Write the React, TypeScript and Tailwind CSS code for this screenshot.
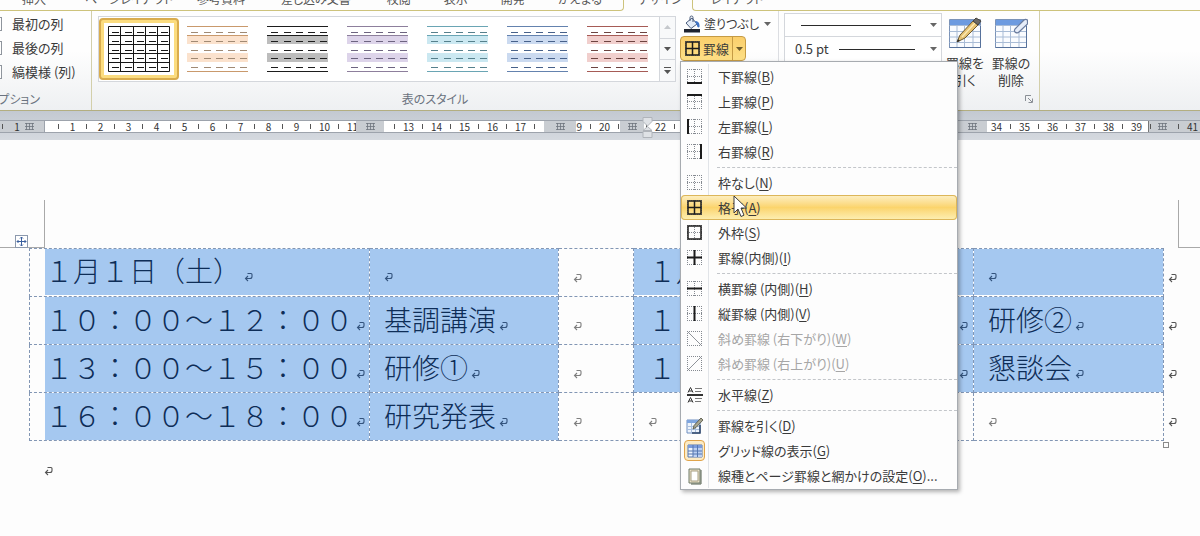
import type { ReactNode } from 'react'

function cn(...parts: (string | false | undefined)[]) {
  return parts.filter(Boolean).join(' ')
}

type Edges = 'b' | 't' | 'l' | 'r' | 'none' | 'all' | 'box' | 'inner' | 'h' | 'v' | 'down' | 'up'

function BorderIcon({ kind }: { kind: Edges }) {
  const diagonal = kind === 'down' || kind === 'up'
  const solid: Record<Edges, string> = {
    b: 'M0 14h15',
    t: 'M0 1h15',
    l: 'M1 0v15',
    r: 'M14 0v15',
    none: '',
    all: 'M1 1h13v13h-13zM1 7.5h13M7.5 1v13',
    box: 'M1 1h13v13h-13z',
    inner: 'M0 7.5h15M7.5 0v15',
    h: 'M0 7.5h15',
    v: 'M7.5 0v15',
    down: '',
    up: '',
  }
  return (
    <svg viewBox="0 0 15 15" className="h-[15px] w-[15px] shrink-0" fill="none" aria-hidden="true">
      <path d="M0 .5h15M0 14.5h15M.5 0v15M14.5 0v15" stroke="#858a91" strokeDasharray="1 1" />
      {!diagonal && <path d="M0 7.5h15M7.5 0v15" stroke="#858a91" strokeDasharray="1 1" />}
      {kind === 'down' && <path d="M1 1l13 13" stroke="#8f9399" />}
      {kind === 'up' && <path d="M1 14L14 1" stroke="#8f9399" />}
      <path d={solid[kind]} stroke="#1c1c1c" strokeWidth={kind === 'all' || kind === 'box' ? 1.5 : 2} />
    </svg>
  )
}

function HorizontalRuleIcon() {
  return (
    <svg viewBox="0 0 16 16" className="h-4 w-4" fill="none" stroke="#333" aria-hidden="true">
      <path d="M0 8h16" strokeWidth="2" />
      <path d="M1 5.5L3.5 .5L6 5.5M2 4h3M1 15.5l2.500-5l2.500 5M2 14h3" />
      <path d="M8 1.500h7M8 4.500h6M8 11.500h7M8 14.500h6" stroke="#777" />
    </svg>
  )
}

function DrawTableIcon() {
  return (
    <svg viewBox="0 0 18 18" className="h-[18px] w-[18px]" fill="none" aria-hidden="true">
      <path d="M1 3h13v13H1z" fill="#eef4fc" stroke="#6f8fc0" />
      <path d="M1 3h13v3H1z" fill="#7fa6df" />
      <path d="M1 9.500h13M1 12.500h13M5.500 6v10M9.500 6v10" stroke="#a9c0e0" />
      <path d="M14 8v8H6" stroke="#2d4468" strokeWidth="1.500" />
      <path d="M7 12l1-3.500l7-7.500l2 2l-7 7.500z" fill="#a8a690" stroke="#4d4c3e" strokeWidth=".8" />
    </svg>
  )
}

function GridlinesIcon() {
  return (
    <svg viewBox="0 0 18 16" className="h-4 w-[18px]" fill="none" aria-hidden="true">
      <path d="M2 2h14v12H2z" fill="#eef4fc" stroke="#5577b0" />
      <path d="M2 2h14v3H2z" fill="#7a9cdc" />
      <path d="M7 5h9v9H7z" fill="#bcd0f2" />
      <path d="M2 8h14M2 11h14M7 2v12M11.500 2v12" stroke="#5577b0" />
    </svg>
  )
}

function PageBorderIcon() {
  return (
    <svg viewBox="0 0 16 18" className="h-[18px] w-4" fill="none" aria-hidden="true">
      <path d="M2 2h11v14H2z" fill="#e9e0c8" stroke="#6f7a68" />
      <path d="M4 4h7v10H4z" fill="#fff" stroke="#a79f82" />
      <path d="M14 3v14H4" stroke="#54604f" />
    </svg>
  )
}

function PaintBucketIcon() {
  return (
    <svg viewBox="0 0 18 18" className="h-[18px] w-[18px] shrink-0" fill="none" aria-hidden="true">
      <path d="M3 8l6-5l5 6l-6 4.500z" fill="#e4ecf7" stroke="#4a5c7c" />
      <path d="M7 6V2.500a1.500 1.500 0 0 1 3 0V7" stroke="#4a5c7c" />
      <path d="M12 6c3 0 5 2 4.500 6c-1 1-2.500 0-2.500-1.500z" fill="#3f74c6" />
      <path d="M1 14h16v3.500H1z" fill="#1f2430" />
    </svg>
  )
}

function LargeTableIcon({ tool }: { tool: 'pencil' | 'eraser' }) {
  return (
    <svg viewBox="0 0 34 32" className="h-8 w-[34px]" fill="none" aria-hidden="true">
      <path d="M1.500 2.500h31v28h-31z" fill="#fafcff" stroke="#7b93b8" />
      <path d="M2 3h30v5H2z" fill="#6d9be0" />
      <path d="M1.500 8.500h31M1.500 14.500h31M1.500 20h31M1.500 25.500h31M9 9v21M16.500 9v21M25 9v21" stroke="#a9bcd6" />
      <path d="M32.500 9v21.500h-31" stroke="#56719b" />
      {tool === 'pencil' ? (
        <>
          <path d="M9 25l3-7L25 4l5 4L17 21z" fill="#e6c272" stroke="#6d5a33" />
          <path d="M14 20L27 6" stroke="#fbe9b4" strokeWidth="1.500" />
          <path d="M25 4l3-3l5 3l-3 4z" fill="#6b6964" stroke="#45433f" />
          <path d="M9 25l1-3l2 2z" fill="#2b2b2b" />
        </>
      ) : (
        <path
          d="M21 12l9-9c1-1 2-1 3.500 0v4L25 15c-2 2-6 0-4-3z"
          fill="#e6edf9"
          stroke="#6a7c9e"
          strokeWidth="1.200"
        />
      )}
    </svg>
  )
}

function Caret({ className }: { className?: string }) {
  return (
    <svg viewBox="0 0 7 4" className={cn('h-1 w-[7px] shrink-0', className)} aria-hidden="true">
      <path d="M0 0h7L3.500 4z" fill="currentColor" />
    </svg>
  )
}

function ReturnMark({ className }: { className?: string }) {
  return (
    <svg
      viewBox="0 0 9 10"
      className={cn('h-[10px] w-[9px] shrink-0', className)}
      fill="none"
      stroke="currentColor"
      aria-hidden="true"
    >
      <path d="M3.500 1.500h3.500q1 0 1 1v2q0 2-2 2H1.500M4 4L1.500 6.500L4 9" strokeWidth="1.100" />
    </svg>
  )
}

const TABS = [
  { label: '挿入', className: 'ml-[22px]' },
  { label: 'ページレイアウト', className: 'ml-[39px]' },
  { label: '参考資料', className: 'ml-6' },
  { label: '差し込み文書', className: 'ml-9' },
  { label: '校閲', className: 'ml-9' },
  { label: '表示', className: 'ml-[33px]' },
  { label: '開発', className: 'ml-[33px]' },
  { label: 'かえまる', className: 'ml-[33px]' },
]

function TabStrip() {
  return (
    <nav className="flex h-[11px] items-stretch bg-[#fdfdfd] text-xs leading-4 whitespace-nowrap text-[#555]">
      <div className="flex w-[624px] items-end rounded-br border-r border-b border-[#cdc37c] pb-[3px]">
        {TABS.map((t) => (
          <button key={t.label} type="button" className={t.className}>
            {t.label}
          </button>
        ))}
      </div>
      <div className="flex w-[68px] items-end pb-1 pl-[14px]">
        <button type="button">デザイン</button>
      </div>
      <div className="flex flex-1 items-end rounded-bl border-b border-l border-[#cdc37c] pb-[3px]">
        <button type="button" className="ml-[18px]">
          レイアウト
        </button>
      </div>
    </nav>
  )
}

type StyleTone = { line: string; dash: string; band: string }

const TONES: StyleTone[] = [
  { line: '#c9996c', dash: '#a08a74', band: '#fbe2cd' },
  { line: '#1d1d1d', dash: '#1d1d1d', band: '#bdbdbd' },
  { line: '#8d7f9c', dash: '#6d6480', band: '#ddd4ea' },
  { line: '#6aa5b4', dash: '#56808c', band: '#cbe8f1' },
  { line: '#6482ae', dash: '#47618a', band: '#cbdaf0' },
  { line: '#a65b56', dash: '#6d4441', band: '#f1cfcd' },
]

const DASH_ROWS = [6, 15, 24, 32, 41]

function dashPath() {
  return DASH_ROWS.map((y) => [4, 17, 29, 41, 53].map((x) => `M${x} ${y + 0.5}h7`).join('')).join('')
}

function BandedThumb({ tone }: { tone: StyleTone }) {
  return (
    <svg viewBox="0 0 61 46" className="h-[46px] w-[61px]" fill="none" aria-hidden="true">
      <path d="M0 10h61v8H0zM0 27h61v9H0z" fill={tone.band} />
      <path d="M0 .5h61M0 9.500h61M0 45.500h61" stroke={tone.line} />
      <path d={dashPath()} stroke={tone.dash} />
    </svg>
  )
}

function GridThumb() {
  return (
    <svg viewBox="0 0 62 46" className="h-[46px] w-[62px]" fill="none" stroke="#161616" aria-hidden="true">
      <path d="M.5 .5h61v45h-61zM0 9.500h62M0 18.500h62M0 27.500h62M0 36.500h62M12.500 0v46M25.500 0v46M37.500 0v46M49.500 0v46" />
      <path d={dashPath()} />
    </svg>
  )
}

function OptionsGroup() {
  return (
    <section className="flex w-[92px] shrink-0 flex-col overflow-hidden border-r border-[#d3cfaa] pt-px">
      <div className="flex h-[76px] flex-col text-[13px] whitespace-nowrap">
        {['最初の列', '最後の列', '縞模様 (列)'].map((label) => (
          <label key={label} className="flex h-6 items-center gap-[10px]">
            <input
              type="checkbox"
              className="-ml-3 h-[14px] w-[14px] shrink-0 appearance-none border border-[#8f959d] bg-white"
            />
            {label}
          </label>
        ))}
      </div>
      <div className="flex h-[22px] items-center justify-end pr-[51px] text-xs whitespace-nowrap text-[#6b7380]">
        オプション
      </div>
    </section>
  )
}

function StyleGallery() {
  return (
    <div className="flex h-[66px] w-[578px] shrink-0 border border-[#d4d7dc] bg-white">
      <button
        type="button"
        aria-label="表 (格子)"
        className="my-px flex w-20 shrink-0 items-center justify-center rounded border-2 border-[#d9ac4e] bg-[#fbdc7f] p-[3px]"
      >
        <span className="flex h-full w-full items-center justify-center bg-white">
          <GridThumb />
        </span>
      </button>
      <div className="flex w-[480px] shrink-0">
        {TONES.map((tone, i) => (
          <button
            key={tone.band}
            type="button"
            aria-label={`表スタイル ${i + 1}`}
            className="my-px flex w-20 items-center pl-2"
          >
            <BandedThumb tone={tone} />
          </button>
        ))}
      </div>
      <div className="flex flex-1 flex-col divide-y divide-[#d4d7dc] border-l border-[#d4d7dc] bg-[#f8f9fa]">
        <button type="button" aria-label="上へ" className="flex flex-1 items-center justify-center text-[#c5c8cc]">
          <Caret className="rotate-180" />
        </button>
        <button type="button" aria-label="下へ" className="flex flex-1 items-center justify-center text-[#555]">
          <Caret />
        </button>
        <button
          type="button"
          aria-label="その他"
          className="flex flex-1 flex-col items-center justify-center gap-0.5 text-[#555]"
        >
          <span className="h-px w-[7px] bg-[#555]" />
          <Caret />
        </button>
      </div>
    </div>
  )
}

type MenuEntry = {
  icon: ReactNode
  text: string
  accel: string
  tail?: string
  disabled?: boolean
  active?: boolean
  checked?: boolean
}

const MENU: MenuEntry[][] = [
  [
    { icon: <BorderIcon kind="b" />, text: '下罫線', accel: 'B' },
    { icon: <BorderIcon kind="t" />, text: '上罫線', accel: 'P' },
    { icon: <BorderIcon kind="l" />, text: '左罫線', accel: 'L' },
    { icon: <BorderIcon kind="r" />, text: '右罫線', accel: 'R' },
  ],
  [
    { icon: <BorderIcon kind="none" />, text: '枠なし', accel: 'N' },
    { icon: <BorderIcon kind="all" />, text: '格子', accel: 'A', active: true },
    { icon: <BorderIcon kind="box" />, text: '外枠', accel: 'S' },
    { icon: <BorderIcon kind="inner" />, text: '罫線(内側)', accel: 'I' },
  ],
  [
    { icon: <BorderIcon kind="h" />, text: '横罫線 (内側)', accel: 'H' },
    { icon: <BorderIcon kind="v" />, text: '縦罫線 (内側)', accel: 'V' },
    { icon: <BorderIcon kind="down" />, text: '斜め罫線 (右下がり)', accel: 'W', disabled: true },
    { icon: <BorderIcon kind="up" />, text: '斜め罫線 (右上がり)', accel: 'U', disabled: true },
  ],
  [{ icon: <HorizontalRuleIcon />, text: '水平線', accel: 'Z' }],
  [
    { icon: <DrawTableIcon />, text: '罫線を引く', accel: 'D' },
    { icon: <GridlinesIcon />, text: 'グリッド線の表示', accel: 'G', checked: true },
    { icon: <PageBorderIcon />, text: '線種とページ罫線と網かけの設定', accel: 'O', tail: '...' },
  ],
]

function MenuItem({ item }: { item: MenuEntry }) {
  return (
    <li className="relative">
      <button
        type="button"
        disabled={item.disabled}
        className={cn(
          'flex h-[25px] w-full items-center text-left text-[13px] leading-4',
          item.disabled ? 'text-[#a6a6a6]' : 'text-[#3a3a3a]',
          item.active && 'rounded-sm bg-linear-to-b from-[#fdf0c4] via-[#fbd46c] to-[#fdf0b4] ring-1 ring-[#dcb65a] ring-inset',
        )}
      >
        <span
          className={cn(
            'flex h-full w-7 shrink-0 items-center justify-center border-r',
            item.active ? 'border-transparent' : 'border-[#e1e4e8]',
          )}
        >
          <span
            className={cn(
              'flex h-[21px] w-[21px] items-center justify-center',
              item.checked && 'rounded-sm border border-[#e0a44a] bg-[#fdebc4]',
            )}
          >
            {item.icon}
          </span>
        </span>
        <span className="pl-[9px]">
          {item.text}(<u className="underline-offset-2">{item.accel}</u>){item.tail}
        </span>
      </button>
      {item.active && <Pointer />}
    </li>
  )
}

function Pointer() {
  return (
    <svg viewBox="0 0 14 23" className="absolute top-0 left-[52px] h-[23px] w-[14px]" aria-hidden="true">
      <path
        d="M1 1v17l4-4l3 7.500l3-1.300l-3-7.200h5.500z"
        fill="#fff"
        stroke="#3c3c3c"
        strokeLinejoin="round"
      />
    </svg>
  )
}

function BordersMenu() {
  return (
    <div className="absolute top-full left-0 z-20 w-[278px] border border-[#a7abb0] bg-[#fdfdfd] pt-0.5 pb-px shadow-[2px_2px_4px_rgba(0,0,0,0.3)]">
      {MENU.map((group, i) => (
        <ul key={group[0].text}>
          {i > 0 && (
            <li role="separator" className="flex h-[6px] items-center">
              <span className="h-full w-7 shrink-0 border-r border-[#e1e4e8]" />
              <span className="ml-2 flex-1 border-t border-dashed border-[#c3c6ca]" />
            </li>
          )}
          {group.map((item) => (
            <MenuItem key={item.accel} item={item} />
          ))}
        </ul>
      ))}
    </div>
  )
}

function StylesGroup() {
  return (
    <section className="flex w-[687px] shrink-0 flex-col border-r border-[#dcdee2] pt-px">
      <div className="flex h-[76px] pl-[6px]">
        <div className="pt-1">
          <StyleGallery />
        </div>
        <div className="ml-1 flex flex-col">
          <button type="button" className="flex h-6 items-center pl-[3px] text-xs whitespace-nowrap">
            <PaintBucketIcon />
            <span className="ml-[3px]">塗りつぶし</span>
            <Caret className="ml-[5px] text-[#666]" />
          </button>
          <div className="relative w-[66px]">
            <div className="flex h-[25px] items-stretch rounded-sm border border-[#c59b45] bg-linear-to-b from-[#fbcf6c] to-[#fddf85] text-[13px] whitespace-nowrap">
              <button type="button" className="flex flex-1 items-center pl-1">
                <BorderIcon kind="all" />
                <span className="ml-[3px]">罫線</span>
              </button>
              <button
                type="button"
                aria-label="罫線メニュー"
                aria-expanded="true"
                className="flex w-[13px] items-center justify-center border-l border-[#c59b45] text-[#6b5a2c]"
              >
                <Caret />
              </button>
            </div>
            <BordersMenu />
          </div>
        </div>
      </div>
      <div className="flex h-[22px] items-center justify-center text-xs text-[#6b7380]">表のスタイル</div>
    </section>
  )
}

function DrawGroup() {
  return (
    <section className="flex w-[261px] shrink-0 flex-col border-r border-[#d3cfaa] pt-px">
      <div className="flex h-[76px] pl-[5px]">
        <div className="flex w-[158px] flex-col pt-px">
          <div className="relative flex h-6 items-center border border-[#d4d7dc] bg-white">
            <select aria-label="ペンのスタイル" className="h-full w-full appearance-none bg-transparent">
              <option value="single" aria-label="一本線"></option>
            </select>
            <span className="pointer-events-none absolute inset-x-4 mr-[14px] h-px bg-[#2b2b2b]" />
            <Caret className="pointer-events-none absolute right-1 text-[#666]" />
          </div>
          <div className="relative flex h-[25px] items-center border border-t-0 border-[#d4d7dc] bg-white">
            <select aria-label="ペンの太さ" className="h-full w-full appearance-none bg-transparent pl-[10px] text-[13px]">
              <option>0.5 pt</option>
            </select>
            <span className="pointer-events-none absolute right-[26px] left-[54px] h-px bg-[#2b2b2b]" />
            <Caret className="pointer-events-none absolute right-1 text-[#666]" />
          </div>
        </div>
        <button type="button" className="flex w-[46px] flex-col items-center pt-[5px] text-[13px] leading-[17px]">
          <LargeTableIcon tool="pencil" />
          <span className="mt-[5px] whitespace-nowrap">罫線を</span>
          <span>引く</span>
        </button>
        <button type="button" className="flex w-[46px] flex-col items-center pt-[5px] text-[13px] leading-[17px]">
          <LargeTableIcon tool="eraser" />
          <span className="mt-[5px] whitespace-nowrap">罫線の</span>
          <span>削除</span>
        </button>
      </div>
      <div className="flex h-[22px] items-center justify-end pr-[6px]">
        <button type="button" aria-label="罫線の詳細">
          <svg viewBox="0 0 8 8" className="h-2 w-2" fill="none" stroke="#8a8f96" aria-hidden="true">
            <path d="M.5 6V.5H6M3 3l4 4M7.500 3.500v4h-4" />
          </svg>
        </button>
      </div>
    </section>
  )
}

// Column stops and positions that sit under a marker carry no number
const HIDDEN_STOPS = [0, 12, 18, 21, 33, 40]
const RULER = Array.from({ length: 43 }, (_, i) => i - 1)

function ColumnStop({ className }: { className?: string }) {
  return (
    <span className={cn('absolute inset-y-0 flex items-center justify-center bg-[#c9cdd2]', className)}>
      <svg viewBox="0 0 9 7" className="h-[7px] w-[9px]" fill="none" stroke="#6f757d" aria-hidden="true">
        <path d="M0 .5h9M0 3.500h9M0 6.500h9M1.500 0v7M4.500 0v7M7.500 0v7" strokeWidth=".8" />
      </svg>
    </span>
  )
}

function Ruler() {
  return (
    <div className="h-[29px] shrink-0 bg-linear-to-b from-[#c3c9d1] to-[#d5d9df] pt-[9px]">
      <div className="relative flex h-[13px] items-center overflow-hidden border-y border-[#9da3ac] bg-white text-[10px] leading-none text-[#333]">
        <span className="absolute inset-y-0 left-0 w-[45px] border-r border-[#9da3ac] bg-[#c9cdd2]" />
        <span className="absolute inset-y-0 right-0 left-[1148px] border-l border-[#777] bg-[#c9cdd2]" />
        <ColumnStop className="left-[23px] w-3" />
        <ColumnStop className="left-[1156px] w-3" />
        <span className="relative ml-[2px] h-[5px] w-px shrink-0 bg-[#555]" />
        {RULER.map((n) => (
          <span key={n} className="relative flex w-7 shrink-0 items-center">
            <span className="flex-1 text-center">{HIDDEN_STOPS.includes(n) ? '' : Math.abs(n)}</span>
            {n !== -1 && <span className="h-[5px] w-px bg-[#555]" />}
          </span>
        ))}
        <ColumnStop className="left-[356px] w-7" />
        <ColumnStop className="left-[544px] w-8" />
        <ColumnStop className="left-[620px] w-6" />
        <ColumnStop className="left-[957px] w-[30px]" />
      </div>
      <svg
        viewBox="0 0 11 22"
        className="absolute left-[642px] -mt-4 h-[22px] w-[11px]"
        fill="#dfe2e6"
        stroke="#b0b4ba"
        aria-hidden="true"
      >
        <path d="M1 .5h9v4L5.500 9L1 4.500zM5.500 9.500L10 13.500H1zM1 14.500h9v6H1z" />
      </svg>
    </div>
  )
}

type Cell = { text: string; selected: boolean }

const on = (text: string): Cell => ({ text, selected: true })
const off = (text: string): Cell => ({ text, selected: false })

const SCHEDULE: Cell[][] = [
  [on('１月１日（土）'), on(''), off(''), on('１月２日（日）'), on('')],
  [on('１０：００～１２：００'), on('基調講演'), off(''), on('１０：００～１２：００'), on('研修②')],
  [on('１３：００～１５：００'), on('研修①'), off(''), on('１３：００～１５：００'), on('懇談会')],
  [on('１６：００～１８：００'), on('研究発表'), off(''), off(''), off('')],
]

function ScheduleCell({ cell, first, header }: { cell: Cell; first: boolean; header: boolean }) {
  return (
    <td className="border border-dashed border-[#8296b4] p-0">
      <div
        className={cn(
          'flex h-[47px] items-center gap-[3px] overflow-hidden pb-1 whitespace-nowrap',
          first ? 'ml-[15px]' : 'pl-[14px]',
          cell.selected ? 'bg-[#a5c8f0] text-[#0e2d57]' : 'text-[#555]',
          header && cell.selected && 'border-b border-white',
        )}
      >
        {cell.text && <span>{cell.text}</span>}
        <ReturnMark className="mt-[14px] opacity-75" />
      </div>
    </td>
  )
}

function Document() {
  return (
    <main className="relative flex-1 bg-[#fdfdfd] pt-[60px]">
      <div className="flex h-12 justify-between">
        <span className="w-[45px] border-r border-b border-[#a9a9a9]" />
        <span className="w-[22px] border-b border-l border-[#a9a9a9]" />
      </div>
      <button
        type="button"
        aria-label="表の移動"
        className="absolute top-[95px] left-[15px] flex h-[13px] w-[13px] items-center justify-center border border-[#8c99ad] bg-white"
      >
        <svg viewBox="0 0 11 11" className="h-[11px] w-[11px]" fill="none" stroke="#3a5f9e" aria-hidden="true">
          <path d="M5.500 1v9M1 5.500h9M4 2.500L5.500 1L7 2.500M4 8.500L5.500 10L7 8.500M2.500 4L1 5.500L2.500 7M8.500 4L10 5.500L8.500 7" />
        </svg>
      </button>
      <div className="pl-[29px]">
        <table className="w-full table-fixed border-collapse text-[28px] leading-none font-light [font-feature-settings:normal]">
          <colgroup>
            <col className="w-[340px]" />
            <col className="w-[189px]" />
            <col className="w-[75px]" />
            <col className="w-[340px]" />
            <col />
            <col className="w-[37px]" />
          </colgroup>
          <tbody>
            {SCHEDULE.map((row, r) => (
              <tr key={r}>
                {row.map((cell, c) => (
                  <ScheduleCell key={c} cell={cell} first={c === 0} header={r === 0} />
                ))}
                <td className="p-0 pl-1 text-[#555]">
                  <ReturnMark className="mt-[10px]" />
                </td>
              </tr>
            ))}
          </tbody>
        </table>
      </div>
      <div className="flex justify-end pr-[31px]">
        <span className="mt-px h-[6px] w-[6px] border border-[#8a8a8a]" />
      </div>
      <div className="pt-[18px] pl-[44px] text-[#555]">
        <ReturnMark />
      </div>
    </main>
  )
}

export default function App() {
  return (
    <div className="relative flex min-h-screen flex-col overflow-hidden bg-[#fdfdfd] font-['Noto_Sans_CJK_JP',sans-serif] text-[#3a3a3a] [font-feature-settings:'palt']">
      <TabStrip />
      <div className="flex h-[100px] shrink-0 border-b border-[#b3ae80] bg-linear-to-b from-[#fefefe] from-40% to-[#eef0f2]">
        <OptionsGroup />
        <StylesGroup />
        <DrawGroup />
      </div>
      <Ruler />
      <Document />
    </div>
  )
}
